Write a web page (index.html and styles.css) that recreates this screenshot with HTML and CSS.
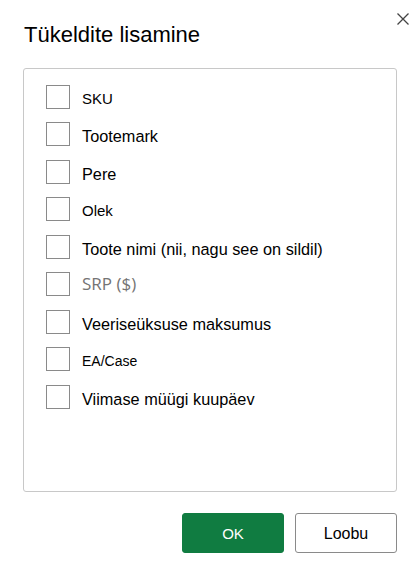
FILE: index.html
```html
<!DOCTYPE html>
<html lang="et">
<head>
<meta charset="utf-8">
<title>Tükeldite lisamine</title>
<link rel="stylesheet" href="styles.css">
</head>
<body>
<div class="dialog">
  <button class="close" aria-label="Sulge">
    <svg width="12" height="12" viewBox="0 0 12 12"><path d="M0.5 0.5 L11.5 11.5 M11.5 0.5 L0.5 11.5" stroke="#444" stroke-width="1.3" fill="none"/></svg>
  </button>
  <h1 class="title">Tükeldite lisamine</h1>
  <div class="list">
    <label class="row"><span class="box"></span><span class="lbl s14">SKU</span></label>
    <label class="row"><span class="box"></span><span class="lbl s15">Tootemark</span></label>
    <label class="row"><span class="box"></span><span class="lbl s15">Pere</span></label>
    <label class="row"><span class="box"></span><span class="lbl s14">Olek</span></label>
    <label class="row"><span class="box"></span><span class="lbl s15">Toote nimi (nii, nagu see on sildil)</span></label>
    <label class="row"><span class="box"></span><span class="lbl srp">SRP ($)</span></label>
    <label class="row"><span class="box"></span><span class="lbl s15">Veeriseüksuse maksumus</span></label>
    <label class="row"><span class="box"></span><span class="lbl s13">EA/Case</span></label>
    <label class="row"><span class="box"></span><span class="lbl s15">Viimase müügi kuupäev</span></label>
  </div>
  <div class="actions">
    <button class="btn primary">OK</button>
    <button class="btn secondary">Loobu</button>
  </div>
</div>
</body>
</html>
```
FILE: styles.css
```css
html, body {
  margin: 0;
  padding: 0;
  background: #ffffff;
}
body {
  font-family: "Liberation Sans", Arial, sans-serif;
  color: #111;
}
.dialog {
  position: relative;
  width: 418px;
  height: 577px;
  box-sizing: border-box;
  padding: 21.5px 21px 0 23px;
}
.close {
  position: absolute;
  top: 13px;
  left: 397px;
  width: 12px;
  height: 12px;
  padding: 0;
  border: 0;
  background: none;
  display: block;
}
.close svg { display: block; }
.title {
  margin: 0 0 0 1px;
  font-size: 22px;
  line-height: 25px;
  font-weight: normal;
  color: #000;
}
.list {
  margin-top: 21px;
  height: 424px;
  box-sizing: border-box;
  border: 1px solid #c8c8c8;
  border-radius: 3px;
  padding: 16px 0 0 22px;
  display: flex;
  flex-direction: column;
  gap: 13.5px;
}
.row {
  display: flex;
  align-items: flex-start;
  gap: 12px;
  height: 24px;
}
.box {
  width: 24px;
  height: 24px;
  box-sizing: border-box;
  border: 1px solid #8a8a8a;
  flex: none;
  background: #fff;
}
.lbl {
  line-height: 24px;
  margin-top: 2px;
  color: #000;
  white-space: nowrap;
}
.s13 { font-size: 14px; }
.s14 { font-size: 15px; }
.s15 { font-size: 16.3px; }
.srp {
  font-family: "Open Sans", "Noto Sans", sans-serif;
  font-size: 17px;
  color: #747474;
  margin-top: 0;
}
.actions {
  margin-top: 21px;
  display: flex;
  justify-content: flex-end;
  gap: 11px;
}
.btn {
  width: 102px;
  height: 40px;
  box-sizing: border-box;
  border-radius: 3px;
  font-family: "Liberation Sans", Arial, sans-serif;
  font-size: 15px;
  padding: 2px 0 0 0;
}
.primary {
  background: #107c41;
  border: 1px solid #107c41;
  color: #fff;
}
.secondary {
  background: #fff;
  border: 1px solid #8a8a8a;
  color: #000;
  font-size: 16px;
}
```
